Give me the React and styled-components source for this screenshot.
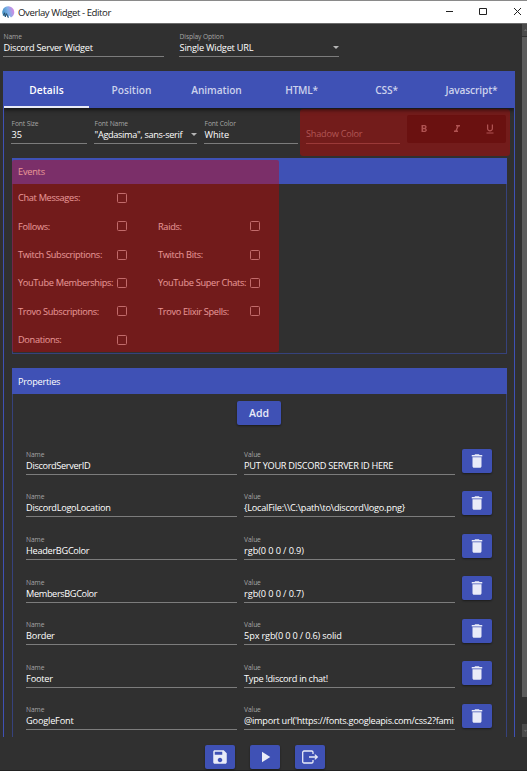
import React from "react";
import styled, { createGlobalStyle } from "styled-components";

const INDIGO = "#3f51b5";
const BG = "#303030";
const EDGE = "#36427c";

const GlobalStyle = createGlobalStyle`
  *, *::before, *::after { box-sizing: border-box; }
  html, body, #root { height: 100%; margin: 0; }
  body {
    background: ${BG};
    color: #fff;
    font-family: "Open Sans", "Noto Sans", sans-serif;
    font-size: 9.2px;
    overflow: hidden;
  }
  svg { display: block; }
`;

const Window = styled.div`
  width: 527px;
  height: 771px;
  display: flex;
  flex-direction: column;
  background: ${BG};
`;

const TitleBar = styled.header`
  height: 24px;
  flex: none;
  display: flex;
  align-items: center;
  padding-left: 2px;
  background: #fff;
  color: #1a1a1a;
  border-top: 1px solid #8a8a8a;
  border-bottom: 1px solid #6b6b6b;
`;

const Title = styled.h1`
  flex: 1;
  margin: 0 0 0 3px;
  font-size: 9.6px;
  font-weight: 400;
  letter-spacing: -0.42px;
  white-space: nowrap;
`;

const WindowControls = styled.div`
  display: flex;
  width: 84px;
  height: 22px;
`;

const Body = styled.div`
  flex: none;
  height: 713px;
  display: flex;
`;

const Content = styled.main`
  width: 522px;
  padding: 0 7px 0 3px;
  overflow: hidden;
`;

const ScrollTrack = styled.div`
  width: 5px;
  display: flex;
  flex-direction: column;
  justify-content: space-between;
  background: ${BG};
`;

const ScrollUpper = styled.div`
  display: grid;
  grid-template-rows: 12px 660px;
  row-gap: 1px;
`;

const ScrollCap = styled.div`
  height: ${(p) => p.$h}px;
  display: flex;
  align-items: center;
  padding-left: 2px;
  background: #4a4a4a;
  overflow: hidden;
`;

const ScrollThumb = styled.div`
  background: #5c5c5c;
`;

const WidgetFields = styled.section`
  height: 47px;
  display: grid;
  grid-template-columns: 161px 160px;
  column-gap: 15px;
  padding-top: 7.5px;
`;

const FieldBox = styled.div`
  height: 25px;
  min-width: 0;
  display: flex;
  flex-direction: column;
  justify-content: space-between;
  border-bottom: 1.5px solid #7c7c7c;
`;

const FieldLabel = styled.span`
  height: 9px;
  padding-left: 0.6px;
  font-size: 6.7px;
  line-height: 9px;
  letter-spacing: -0.12px;
  color: #a5a5a5;
  white-space: nowrap;
`;

const FieldValue = styled.div`
  flex: 1;
  display: flex;
  align-items: flex-start;
  justify-content: space-between;
  padding-left: 0.6px;
  line-height: 13px;
  letter-spacing: ${(p) => p.$track}px;
  white-space: nowrap;
`;

const Caret = styled.i`
  flex: none;
  margin-top: 5px;
  border: 3px solid transparent;
  border-top-color: #b5b5b5;
  border-bottom: 0;
`;

const TabPanel = styled.section`
  width: 512px;
  height: 680px;
  border: 1px solid ${INDIGO};
  border-top: 0;
`;

const TabList = styled.nav`
  height: 37px;
  display: grid;
  grid-template-columns: repeat(6, 1fr);
  background: ${INDIGO};
  box-shadow: 0 1px 4px 1px rgba(0, 0, 0, 0.6);
  clip-path: inset(0 0 -8px 0);
`;

const Tab = styled.div`
  display: flex;
  align-items: center;
  justify-content: center;
  padding-top: 3px;
  font-size: 10.2px;
  font-weight: 600;
  letter-spacing: ${(p) => p.$track}px;
  color: ${(p) => (p.$active ? "#fff" : "#ccd1ec")};
  border-bottom: 2px solid ${(p) => (p.$active ? "#e8eaf6" : "transparent")};
`;

const FontRow = styled.div`
  height: 50px;
  display: flex;
  padding: 1px 0 0 7px;
`;

const FontFields = styled.div`
  width: 289px;
  display: grid;
  grid-template-columns: 76px 103px 94px;
  column-gap: 7px;
  padding-top: 9.5px;
`;

const DisabledZone = styled.div`
  width: 210px;
  height: 47px;
  display: flex;
  justify-content: space-between;
  padding: 6px 4px 0 6px;
  border-radius: 3px;
  background: #731c1b;
`;

const ShadowField = styled.div`
  width: 94px;
  height: 28.5px;
  padding-top: 12px;
  line-height: 14px;
  letter-spacing: -0.25px;
  color: #b25655;
  border-bottom: 1.5px solid #9b3938;
`;

const StyleToggles = styled.div`
  width: 99px;
  height: 28px;
  display: grid;
  grid-template-columns: repeat(3, 1fr);
  align-items: center;
  justify-items: center;
  background: #6a1110;
  border-radius: 2px;
  color: #b05352;
`;

const Panel = styled.section`
  width: 495px;
  height: ${(p) => p.$h}px;
  margin: 0 0 ${(p) => p.$gap || 0}px 8px;
  position: relative;
  border: 1.5px solid ${EDGE};
  border-top: 0;
  border-bottom-width: ${(p) => (p.$open ? 0 : 1.5)}px;
`;

const PanelHeader = styled.h2`
  height: 26px;
  margin: 0 -1px;
  padding-left: 6px;
  font-size: 9.2px;
  font-weight: 400;
  line-height: 27px;
  letter-spacing: -0.22px;
  background: ${INDIGO};
`;

const EventGrid = styled.div`
  display: grid;
  grid-template-columns: 98.5px 41.5px 92px 16px;
  grid-auto-rows: 28.45px;
  align-items: center;
  margin-top: -0.6px;
  padding-left: 5px;
`;

const EventLabel = styled.label`
  grid-column: ${(p) => p.$col};
  letter-spacing: -0.31px;
  white-space: nowrap;
`;

const Checkbox = styled.span`
  width: 10px;
  height: 10px;
  border: 1.3px solid #b8b8b8;
  border-radius: 1.5px;
`;

const RedTint = styled.div`
  position: absolute;
  left: -1px;
  top: 2px;
  width: 266.5px;
  height: 192px;
  border-radius: 2px;
  background: rgba(208, 0, 0, 0.42);
`;

const Button = styled.button`
  width: ${(p) => p.$w || 30}px;
  height: 24px;
  display: flex;
  align-items: center;
  justify-content: center;
  padding: 0;
  border: 0;
  border-radius: 2px;
  background: ${INDIGO};
  color: #e9ebf8;
  font: 600 10.5px "Open Sans", "Noto Sans", sans-serif;
  box-shadow: 0 1px 2px rgba(0, 0, 0, 0.45);
`;

const AddRow = styled.div`
  display: flex;
  justify-content: center;
  height: 54.5px;
  padding: 7px 1px 0 0;
`;

const PropertyRow = styled.div`
  height: 42.57px;
  display: grid;
  grid-template-columns: 211px 211px 30px;
  column-gap: 7px;
  padding-left: 12.5px;
`;

const PropertyField = styled.div`
  padding-top: 1.4px;
  min-width: 0;
`;

const Footer = styled.footer`
  flex: 1;
  display: flex;
  justify-content: center;
  gap: 15px;
  padding: 8px 0 0 3px;
  border-bottom: 1px solid #222;
`;

function Field({ label, value, track = -0.3, caret }) {
  return (
    <FieldBox>
      <FieldLabel>{label}</FieldLabel>
      <FieldValue $track={track}>
        {value}
        {caret && <Caret />}
      </FieldValue>
    </FieldBox>
  );
}

function Logo() {
  return (
    <svg width="13" height="14" viewBox="0 0 13 14">
      <defs>
        <linearGradient id="shell" x1="0" y1="0.600" x2="1" y2="0.300">
          <stop offset="0" stopColor="#3f8fc0" />
          <stop offset="0.500" stopColor="#7fb0e8" />
          <stop offset="1" stopColor="#dc86e4" />
        </linearGradient>
      </defs>
      <path d="M1.200 10.500A6 6 0 1 1 9 12.600L7.300 10.600 6.200 13 4.500 9.800 3.600 12z" fill="url(#shell)" />
      <path d="M1.300 10.500 2.600 7.800 3.400 11.800 4.500 8.600 6.300 12.800" fill="none" stroke="#224763" strokeWidth="0.900" />
    </svg>
  );
}

function WindowIcons() {
  return (
    <svg width="84" height="22" viewBox="0 0 84 22" fill="none" stroke="#222" strokeWidth="1">
      <path d="M3 10.500h7M36.500 7.500h7v6h-7zM71 7l7 7M78 7l-7 7" />
    </svg>
  );
}

function ScrollArrow({ down }) {
  return (
    <svg width="6" height="4" viewBox="0 0 6 4" fill="#777">
      <path d={down ? "M0 .5h6l-3 3z" : "M0 3.500h6l-3-3z"} />
    </svg>
  );
}

const ICONS = {
  trash: "M6 19c0 1.100.9 2 2 2h8c1.100 0 2-.9 2-2V7H6v12zM19 4h-3.500l-1-1h-5l-1 1H5v2h14V4z",
  save: "M17 3H5c-1.110 0-2 .9-2 2v14c0 1.100.89 2 2 2h14c1.100 0 2-.9 2-2V7l-4-4zm-5 16c-1.660 0-3-1.340-3-3s1.340-3 3-3 3 1.340 3 3-1.340 3-3 3zm3-10H5V5h10v4z",
  play: "M8 5v14l11-7z",
  bold: "M15.600 10.790c.97-.67 1.650-1.770 1.650-2.790 0-2.260-1.750-4-4-4H7v14h7.040c2.090 0 3.710-1.700 3.710-3.790 0-1.520-.86-2.820-2.150-3.420zM10 6.500h3c.83 0 1.500.67 1.500 1.500s-.67 1.500-1.500 1.500h-3v-3zm3.500 9H10v-3h3.500c.83 0 1.500.67 1.500 1.500s-.67 1.500-1.500 1.500z",
  italic: "M10 4v3h2.210l-3.420 8H6v3h8v-3h-2.210l3.420-8H18V4z",
  underline: "M12 17c3.310 0 6-2.690 6-6V3h-2.500v8c0 1.930-1.570 3.500-3.500 3.500S8.500 12.930 8.500 11V3H6v8c0 3.310 2.690 6 6 6zm-7 2v2h14v-2H5z",
};

function Icon({ name, size }) {
  return (
    <svg width={size} height={size} viewBox="0 0 24 24" fill="currentColor">
      <path d={ICONS[name]} />
    </svg>
  );
}

function ExportIcon() {
  return (
    <svg width="18" height="14" viewBox="0 0 18 14" fill="none" stroke="currentColor" strokeWidth="1.300">
      <path d="M12 4V2.300a1.300 1.300 0 0 0-1.300-1.300H3A1.300 1.300 0 0 0 1.700 2.300v9.400A1.300 1.300 0 0 0 3 13h7.700a1.300 1.300 0 0 0 1.300-1.300V10M8 7h8M13.800 4.600 16.300 7l-2.500 2.400" />
    </svg>
  );
}

const TABS = [
  ["Details", 0.1],
  ["Position", 0],
  ["Animation", -0.1],
  ["HTML*", -0.3],
  ["CSS*", -0.15],
  ["Javascript*", -0.15],
];

const EVENTS = [
  ["Chat Messages:"],
  ["Follows:", "Raids:"],
  ["Twitch Subscriptions:", "Twitch Bits:"],
  ["YouTube Memberships:", "YouTube Super Chats:"],
  ["Trovo Subscriptions:", "Trovo Elixir Spells:"],
  ["Donations:"],
];

const PROPERTIES = [
  { name: "DiscordServerID", nameTrack: -0.35, value: "PUT YOUR DISCORD SERVER ID HERE", track: -0.27 },
  { name: "DiscordLogoLocation", value: "{LocalFile:\\\\C:\\path\\to\\discord\\logo.png}", track: -0.26 },
  { name: "HeaderBGColor", value: "rgb(0 0 0 / 0.9)", track: -0.1 },
  { name: "MembersBGColor", nameTrack: -0.38, value: "rgb(0 0 0 / 0.7)", track: -0.1 },
  { name: "Border", nameTrack: -0.2, value: "5px rgb(0 0 0 / 0.6) solid", track: -0.17 },
  { name: "Footer", nameTrack: -0.2, value: "Type !discord in chat!" },
  { name: "GoogleFont", nameTrack: -0.2, value: "@import url('https://fonts.googleapis.com/css2?fami", track: -0.27 },
];

export default function App() {
  return (
    <Window>
      <GlobalStyle />
      <TitleBar>
        <Logo />
        <Title>Overlay Widget - Editor</Title>
        <WindowControls><WindowIcons /></WindowControls>
      </TitleBar>
      <Body>
        <Content>
          <WidgetFields>
            <Field label="Name" value="Discord Server Widget" track={-0.27} />
            <Field label="Display Option" value="Single Widget URL" track={-0.2} caret />
          </WidgetFields>
          <TabPanel>
            <TabList>
              {TABS.map(([name, track], i) => (
                <Tab key={name} $active={i === 0} $track={track}>{name}</Tab>
              ))}
            </TabList>
            <FontRow>
              <FontFields>
                <Field label="Font Size" value="35" track={-0.15} />
                <Field label="Font Name" value={'"Agdasima", sans-serif'} track={-0.34} caret />
                <Field label="Font Color" value="White" track={-0.1} />
              </FontFields>
              <DisabledZone>
                <ShadowField>Shadow Color</ShadowField>
                <StyleToggles>
                  <Icon name="bold" size={12} />
                  <Icon name="italic" size={12} />
                  <Icon name="underline" size={12} />
                </StyleToggles>
              </DisabledZone>
            </FontRow>
            <Panel $h={195.5} $gap={14.5}>
              <PanelHeader>Events</PanelHeader>
              <EventGrid>
                {EVENTS.map(([a, b]) => (
                  <React.Fragment key={a}>
                    <EventLabel $col={1}>{a}</EventLabel>
                    <Checkbox />
                    {b && <EventLabel $col={3}>{b}</EventLabel>}
                    {b && <Checkbox />}
                  </React.Fragment>
                ))}
              </EventGrid>
              <RedTint />
            </Panel>
            <Panel $h={369} $open>
              <PanelHeader>Properties</PanelHeader>
              <AddRow><Button $w={44}>Add</Button></AddRow>
              {PROPERTIES.map((p) => (
                <PropertyRow key={p.name}>
                  <PropertyField><Field label="Name" value={p.name} track={p.nameTrack} /></PropertyField>
                  <PropertyField><Field label="Value" value={p.value} track={p.track} /></PropertyField>
                  <Button aria-label="Delete"><Icon name="trash" size={18} /></Button>
                </PropertyRow>
              ))}
            </Panel>
          </TabPanel>
        </Content>
        <ScrollTrack>
          <ScrollUpper>
            <ScrollCap $h={12}><ScrollArrow /></ScrollCap>
            <ScrollThumb />
          </ScrollUpper>
          <ScrollCap $h={13}><ScrollArrow down /></ScrollCap>
        </ScrollTrack>
      </Body>
      <Footer>
        <Button aria-label="Save"><Icon name="save" size={18} /></Button>
        <Button aria-label="Play"><Icon name="play" size={18} /></Button>
        <Button aria-label="Export"><ExportIcon /></Button>
      </Footer>
    </Window>
  );
}
